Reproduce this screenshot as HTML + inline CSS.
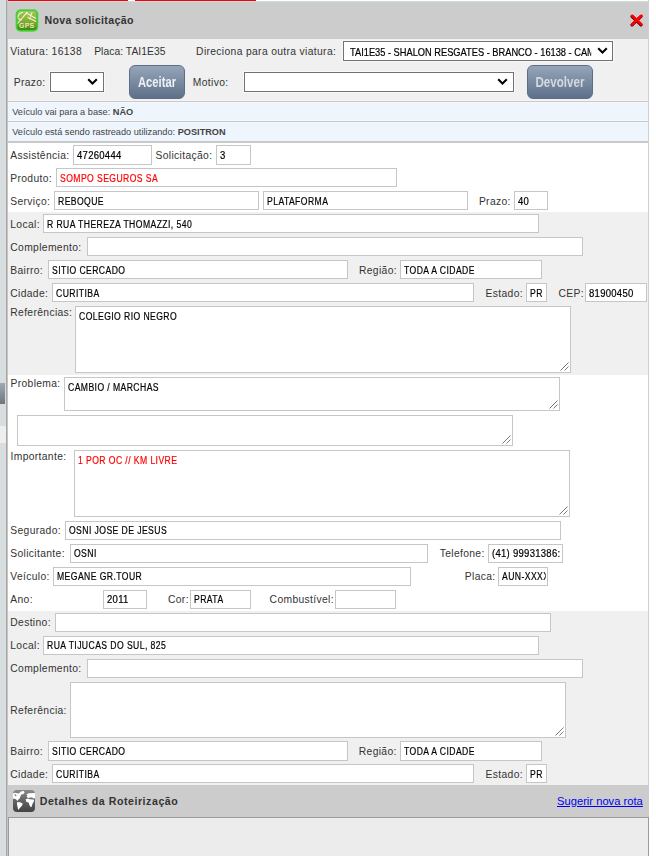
<!DOCTYPE html>
<html><head><meta charset="utf-8"><style>
*{margin:0;padding:0;box-sizing:content-box}
html,body{width:656px;height:856px;overflow:hidden;background:#fff}
body{position:relative;font-family:"Liberation Sans",sans-serif}
.t{position:absolute;white-space:nowrap}
.inp{position:absolute;background:#fff;border:1px solid #c6c6c6}
.sel{position:absolute;background:#fff;border:1px solid #727272;box-shadow:0 0 0 1px #f9f9f9}
.grip{position:absolute}
.bg{position:absolute}
.btn{position:absolute;border:1px solid #5d6f86;border-radius:6px;background:linear-gradient(#95a6b9,#5e7089);}
.btn span{position:absolute;left:0;right:0;text-align:center;font-weight:bold;color:#eef1f4;white-space:nowrap}
</style></head><body>
<div class="bg" style="left:0px;top:0px;width:6px;height:856px;background:#d8dde0;"></div>
<div class="bg" style="left:0px;top:383px;width:5px;height:21px;background:linear-gradient(#a0a8b0,#6e777f);"></div>
<div class="bg" style="left:0px;top:426px;width:6px;height:17px;background:#eeeeee;"></div>
<div class="bg" style="left:6px;top:0px;width:1px;height:856px;background:#a6a6a6;"></div>
<div class="bg" style="left:7px;top:0px;width:1px;height:856px;background:#c4c4c4;"></div>
<div class="bg" style="left:648px;top:0px;width:1px;height:856px;background:#cfcfcf;"></div>
<div class="bg" style="left:8px;top:0px;width:120px;height:1px;background:#f00;"></div>
<div class="bg" style="left:135px;top:0px;width:121px;height:1px;background:#f00;"></div>
<div class="bg" style="left:8px;top:1px;width:640px;height:1px;background:#cddcdc;"></div>
<div class="bg" style="left:8px;top:2px;width:640px;height:37px;background:#cccccc;"></div>
<div class="bg" style="left:8px;top:39px;width:640px;height:62px;background:#f0f0f0;"></div>
<div class="bg" style="left:8px;top:100px;width:640px;height:1px;background:#f5f5f5;"></div>
<div class="bg" style="left:8px;top:101px;width:640px;height:1px;background:#c8c8c8;"></div>
<div class="bg" style="left:8px;top:102px;width:640px;height:19px;background:#eef5fd;"></div>
<div class="bg" style="left:8px;top:102px;width:640px;height:1px;background:#f5f9fe;"></div>
<div class="bg" style="left:8px;top:120px;width:640px;height:1px;background:#f5f9fe;"></div>
<div class="bg" style="left:8px;top:121px;width:640px;height:1px;background:#c8c8c8;"></div>
<div class="bg" style="left:8px;top:122px;width:640px;height:19px;background:#eef5fd;"></div>
<div class="bg" style="left:8px;top:122px;width:640px;height:1px;background:#f5f9fe;"></div>
<div class="bg" style="left:8px;top:141px;width:640px;height:2px;background:#c8c8c8;"></div>
<div class="bg" style="left:8px;top:212px;width:640px;height:163px;background:#f0f0f0;"></div>
<div class="bg" style="left:8px;top:611px;width:640px;height:174px;background:#f0f0f0;"></div>
<div class="bg" style="left:8px;top:785px;width:641px;height:32px;background:#cccccc;"></div>
<div class="bg" style="left:8px;top:817px;width:641px;height:39px;background:#ececec;box-sizing:border-box;border:1px solid #9a9a9a;border-bottom:none"></div>
<svg style="position:absolute;left:15px;top:9px" width="24" height="24" viewBox="0 0 24 24">
<defs><linearGradient id="gg" x1="0" y1="0" x2="0" y2="1"><stop offset="0" stop-color="#a6c65a"/><stop offset="0.55" stop-color="#86ad30"/><stop offset="0.8" stop-color="#6f9a1c"/><stop offset="1" stop-color="#4a7a06"/></linearGradient>
<filter id="gl" x="-20%" y="-20%" width="140%" height="140%"><feGaussianBlur stdDeviation="0.7"/></filter></defs>
<rect x="0.6" y="0.2" width="22.8" height="22.6" rx="5" fill="#44dd44" filter="url(#gl)"/>
<rect x="1.6" y="1.4" width="20.8" height="20.2" rx="3.6" fill="#2fc42f"/>
<rect x="2.4" y="2.1" width="19.2" height="18.7" rx="3" fill="url(#gg)"/>
<g stroke="#f4fbe0" stroke-width="1.1" fill="none" opacity="0.95">
<path d="M2.5 14.5 L12.3 3.2"/>
<path d="M2.8 8.5 Q3.5 4 8 3.2"/>
<path d="M3 9.5 L6.5 11"/>
<path d="M10.8 3.8 L21 9.4"/>
<path d="M12.5 8.3 L21 12.6"/>
<path d="M17.2 3.2 L15.2 7.6"/>
<path d="M14 10 L16 8.6"/>
</g>
<text x="12" y="18.8" text-anchor="middle" font-family="Liberation Sans" font-size="6.4" fill="#f4fbe0" stroke="#f4fbe0" stroke-width="0.15" letter-spacing="0.6">GPS</text>
</svg>
<div class="t" style="left:44.5px;top:10.00px;font-size:10.6px;line-height:20px;color:#333;font-weight:bold;letter-spacing:0.35px;">Nova solicitação</div>
<svg style="position:absolute;left:629px;top:13px" width="16" height="15" viewBox="0 0 16 15">
<path d="M3.3 2.8 L12.3 11.3 M12.3 2.8 L3.3 11.3" stroke="#fff" stroke-width="3.2" stroke-linecap="round" transform="translate(0,-0.5)" opacity="0.6"/>
<path d="M3.3 2.8 L12.3 11.3 M12.3 2.8 L3.3 11.3" stroke="#300" stroke-width="3.2" stroke-linecap="round" transform="translate(-0.3,0.6)"/>
<path d="M3.3 2.8 L12.3 11.3 M12.3 2.8 L3.3 11.3" stroke="#f00" stroke-width="2.9" stroke-linecap="round"/>
</svg>
<div class="t" style="left:10.3px;top:41.50px;font-size:10.3px;line-height:20px;color:#333;letter-spacing:0.35px;">Viatura: 16138</div>
<div class="t" style="left:94.2px;top:41.50px;font-size:10.3px;line-height:20px;color:#333;letter-spacing:0.05px;">Placa: TAI1E35</div>
<div class="t" style="left:196.1px;top:41.50px;font-size:10.3px;line-height:20px;color:#333;letter-spacing:0.35px;">Direciona para outra viatura:</div>
<div class="sel" style="left:343px;top:41px;width:268px;height:18px"></div>
<div class="t" style="left:349.5px;top:42.50px;font-size:10.3px;line-height:20px;color:#000;transform:scaleX(0.9);transform-origin:0 0;letter-spacing:0.001px;width:268px;overflow:hidden;-webkit-text-stroke:0.2px #000;">TAI1E35 - SHALON RESGATES - BRANCO - 16138 - CAM</div>
<svg style="position:absolute;left:597px;top:47px" width="11" height="7" viewBox="0 0 11 7"><path d="M1.2 1.2 L5.5 5.5 L9.8 1.2" stroke="#000" stroke-width="2" fill="none"/></svg>
<div class="t" style="left:13.7px;top:72.50px;font-size:10.3px;line-height:20px;color:#333;letter-spacing:0.35px;">Prazo:</div>
<div class="sel" style="left:50px;top:72px;width:52px;height:18px"></div>
<svg style="position:absolute;left:87px;top:78px" width="11" height="7" viewBox="0 0 11 7"><path d="M1.2 1.2 L5.5 5.5 L9.8 1.2" stroke="#000" stroke-width="2" fill="none"/></svg>
<div class="btn" style="left:129px;top:65px;width:54px;height:32px"><span style="top:8px;font-size:14px;transform:scaleX(0.8)">Aceitar</span></div>
<div class="t" style="left:192.8px;top:72.50px;font-size:10.3px;line-height:20px;color:#333;letter-spacing:0.35px;">Motivo:</div>
<div class="sel" style="left:244px;top:72px;width:268px;height:18px"></div>
<svg style="position:absolute;left:497px;top:78px" width="11" height="7" viewBox="0 0 11 7"><path d="M1.2 1.2 L5.5 5.5 L9.8 1.2" stroke="#000" stroke-width="2" fill="none"/></svg>
<div class="btn" style="left:527px;top:65px;width:64px;height:32px"><span style="top:8px;font-size:14px;color:#d3d9e0;transform:scaleX(0.83)">Devolver</span></div>
<div class="t" style="left:12.2px;top:102.00px;font-size:9.2px;line-height:20px;color:#444;">Veículo vai para a base: <b>NÃO</b></div>
<div class="t" style="left:12.2px;top:122.00px;font-size:9.2px;line-height:20px;color:#444;">Veículo está sendo rastreado utilizando: <b>POSITRON</b></div>
<div class="t" style="left:10.3px;top:145.50px;font-size:10.3px;line-height:20px;color:#333;letter-spacing:0.35px;">Assistência:</div>
<div class="inp" style="left:73px;top:145px;width:77px;height:18px"></div>
<div class="t" style="left:76.5px;top:145.50px;font-size:10px;line-height:20px;color:#000;transform:scaleX(0.95);transform-origin:0 0;letter-spacing:0.3px;max-width:76.8px;overflow:hidden;-webkit-text-stroke:0.2px #000;">47260444</div>
<div class="t" style="left:155.5px;top:145.50px;font-size:10.3px;line-height:20px;color:#333;letter-spacing:0.35px;">Solicitação:</div>
<div class="inp" style="left:216px;top:145px;width:33px;height:18px"></div>
<div class="t" style="left:219.5px;top:145.50px;font-size:10px;line-height:20px;color:#000;transform:scaleX(0.95);transform-origin:0 0;letter-spacing:0.3px;max-width:30.5px;overflow:hidden;-webkit-text-stroke:0.2px #000;">3</div>
<div class="t" style="left:10.3px;top:168.50px;font-size:10.3px;line-height:20px;color:#333;letter-spacing:0.35px;">Produto:</div>
<div class="inp" style="left:56px;top:168px;width:339px;height:17px"></div>
<div class="t" style="left:59.5px;top:168.50px;font-size:10px;line-height:20px;color:#f00;transform:scaleX(0.86);transform-origin:0 0;letter-spacing:0.5px;max-width:389.5px;overflow:hidden;-webkit-text-stroke:0.2px #f00;">SOMPO SEGUROS SA</div>
<div class="t" style="left:10.3px;top:191.50px;font-size:10.3px;line-height:20px;color:#333;letter-spacing:0.35px;">Serviço:</div>
<div class="inp" style="left:54px;top:191px;width:203px;height:17px"></div>
<div class="t" style="left:57.5px;top:191.50px;font-size:10px;line-height:20px;color:#000;transform:scaleX(0.86);transform-origin:0 0;letter-spacing:0.5px;max-width:231.4px;overflow:hidden;-webkit-text-stroke:0.2px #000;">REBOQUE</div>
<div class="inp" style="left:263px;top:191px;width:203px;height:17px"></div>
<div class="t" style="left:266.5px;top:191.50px;font-size:10px;line-height:20px;color:#000;transform:scaleX(0.86);transform-origin:0 0;letter-spacing:0.5px;max-width:231.4px;overflow:hidden;-webkit-text-stroke:0.2px #000;">PLATAFORMA</div>
<div class="t" style="left:478.9px;top:191.50px;font-size:10.3px;line-height:20px;color:#333;letter-spacing:0.35px;">Prazo:</div>
<div class="inp" style="left:514px;top:191px;width:32px;height:17px"></div>
<div class="t" style="left:517.5px;top:191.50px;font-size:10px;line-height:20px;color:#000;transform:scaleX(0.95);transform-origin:0 0;letter-spacing:0.3px;max-width:29.5px;overflow:hidden;-webkit-text-stroke:0.2px #000;">40</div>
<div class="t" style="left:10.3px;top:214.50px;font-size:10.3px;line-height:20px;color:#333;letter-spacing:0.35px;">Local:</div>
<div class="inp" style="left:43px;top:214px;width:494px;height:17px"></div>
<div class="t" style="left:46.5px;top:214.50px;font-size:10px;line-height:20px;color:#000;transform:scaleX(0.86);transform-origin:0 0;letter-spacing:0.5px;max-width:569.8px;overflow:hidden;-webkit-text-stroke:0.2px #000;">R RUA THEREZA THOMAZZI, 540</div>
<div class="t" style="left:10.3px;top:237.50px;font-size:10.3px;line-height:20px;color:#333;letter-spacing:0.35px;">Complemento:</div>
<div class="inp" style="left:87px;top:237px;width:494px;height:17px"></div>
<div class="t" style="left:10.3px;top:260.50px;font-size:10.3px;line-height:20px;color:#333;letter-spacing:0.35px;">Bairro:</div>
<div class="inp" style="left:48px;top:260px;width:298px;height:17px"></div>
<div class="t" style="left:51.5px;top:260.50px;font-size:10px;line-height:20px;color:#000;transform:scaleX(0.86);transform-origin:0 0;letter-spacing:0.5px;max-width:341.9px;overflow:hidden;-webkit-text-stroke:0.2px #000;">SITIO CERCADO</div>
<div class="t" style="left:359px;top:260.50px;font-size:10.3px;line-height:20px;color:#333;letter-spacing:0.35px;">Região:</div>
<div class="inp" style="left:400px;top:260px;width:140px;height:17px"></div>
<div class="t" style="left:403.5px;top:260.50px;font-size:10px;line-height:20px;color:#000;transform:scaleX(0.86);transform-origin:0 0;letter-spacing:0.5px;max-width:158.1px;overflow:hidden;-webkit-text-stroke:0.2px #000;">TODA A CIDADE</div>
<div class="t" style="left:10.3px;top:283.50px;font-size:10.3px;line-height:20px;color:#333;letter-spacing:0.35px;">Cidade:</div>
<div class="inp" style="left:52px;top:283px;width:420px;height:17px"></div>
<div class="t" style="left:55.5px;top:283.50px;font-size:10px;line-height:20px;color:#000;transform:scaleX(0.86);transform-origin:0 0;letter-spacing:0.5px;max-width:483.7px;overflow:hidden;-webkit-text-stroke:0.2px #000;">CURITIBA</div>
<div class="t" style="left:485.6px;top:283.50px;font-size:10.3px;line-height:20px;color:#333;letter-spacing:0.35px;">Estado:</div>
<div class="inp" style="left:526px;top:283px;width:19px;height:17px"></div>
<div class="t" style="left:529.5px;top:283.50px;font-size:10px;line-height:20px;color:#000;transform:scaleX(0.86);transform-origin:0 0;letter-spacing:0.5px;max-width:17.4px;overflow:hidden;-webkit-text-stroke:0.2px #000;">PR</div>
<div class="t" style="left:558.5px;top:283.50px;font-size:10.3px;line-height:20px;color:#333;letter-spacing:0.35px;">CEP:</div>
<div class="inp" style="left:585px;top:283px;width:60px;height:17px"></div>
<div class="t" style="left:588.5px;top:283.50px;font-size:10px;line-height:20px;color:#000;transform:scaleX(0.95);transform-origin:0 0;letter-spacing:0.3px;max-width:58.9px;overflow:hidden;-webkit-text-stroke:0.2px #000;">81900450</div>
<div class="t" style="left:10.3px;top:302.50px;font-size:10.3px;line-height:20px;color:#333;letter-spacing:0.35px;">Referências:</div>
<div class="inp" style="left:75px;top:306px;width:494px;height:65px"></div>
<svg class="grip" style="left:559px;top:361px" width="10" height="10" viewBox="0 0 10 10"><path d="M1.5 9.5 L9.5 1.5 M5.5 9.5 L9.5 5.5" stroke="#6a6a6a" stroke-width="0.9" fill="none"/></svg>
<div class="t" style="left:79px;top:306.50px;font-size:10px;line-height:20px;color:#000;transform:scaleX(0.86);transform-origin:0 0;letter-spacing:0.5px;-webkit-text-stroke:0.2px #000;">COLEGIO RIO NEGRO</div>
<div class="t" style="left:10.5px;top:373.50px;font-size:10.3px;line-height:20px;color:#333;letter-spacing:0.35px;">Problema:</div>
<div class="inp" style="left:64px;top:377px;width:494px;height:32px"></div>
<svg class="grip" style="left:548px;top:399px" width="10" height="10" viewBox="0 0 10 10"><path d="M1.5 9.5 L9.5 1.5 M5.5 9.5 L9.5 5.5" stroke="#6a6a6a" stroke-width="0.9" fill="none"/></svg>
<div class="t" style="left:68px;top:377.50px;font-size:10px;line-height:20px;color:#000;transform:scaleX(0.86);transform-origin:0 0;letter-spacing:0.5px;-webkit-text-stroke:0.2px #000;">CAMBIO / MARCHAS</div>
<div class="inp" style="left:17px;top:415px;width:494px;height:29px"></div>
<svg class="grip" style="left:501px;top:434px" width="10" height="10" viewBox="0 0 10 10"><path d="M1.5 9.5 L9.5 1.5 M5.5 9.5 L9.5 5.5" stroke="#6a6a6a" stroke-width="0.9" fill="none"/></svg>
<div class="t" style="left:10.5px;top:446.50px;font-size:10.3px;line-height:20px;color:#333;letter-spacing:0.35px;">Importante:</div>
<div class="inp" style="left:74px;top:450px;width:494px;height:65px"></div>
<svg class="grip" style="left:558px;top:505px" width="10" height="10" viewBox="0 0 10 10"><path d="M1.5 9.5 L9.5 1.5 M5.5 9.5 L9.5 5.5" stroke="#6a6a6a" stroke-width="0.9" fill="none"/></svg>
<div class="t" style="left:78px;top:450.50px;font-size:10px;line-height:20px;color:#f00;transform:scaleX(0.86);transform-origin:0 0;letter-spacing:0.5px;-webkit-text-stroke:0.2px #f00;">1 POR OC // KM LIVRE</div>
<div class="t" style="left:10.3px;top:520.50px;font-size:10.3px;line-height:20px;color:#333;letter-spacing:0.35px;">Segurado:</div>
<div class="inp" style="left:65px;top:521px;width:494px;height:17px"></div>
<div class="t" style="left:68.5px;top:520.50px;font-size:10px;line-height:20px;color:#000;transform:scaleX(0.86);transform-origin:0 0;letter-spacing:0.5px;max-width:569.8px;overflow:hidden;-webkit-text-stroke:0.2px #000;">OSNI JOSE DE JESUS</div>
<div class="t" style="left:10.3px;top:543.50px;font-size:10.3px;line-height:20px;color:#333;letter-spacing:0.35px;">Solicitante:</div>
<div class="inp" style="left:70px;top:544px;width:356px;height:17px"></div>
<div class="t" style="left:73.5px;top:543.50px;font-size:10px;line-height:20px;color:#000;transform:scaleX(0.86);transform-origin:0 0;letter-spacing:0.5px;max-width:409.3px;overflow:hidden;-webkit-text-stroke:0.2px #000;">OSNI</div>
<div class="t" style="left:439.7px;top:543.50px;font-size:10.3px;line-height:20px;color:#333;letter-spacing:0.35px;">Telefone:</div>
<div class="inp" style="left:488px;top:544px;width:73px;height:17px"></div>
<div class="t" style="left:491.5px;top:543.50px;font-size:10px;line-height:20px;color:#000;transform:scaleX(0.95);transform-origin:0 0;letter-spacing:0.3px;max-width:72.6px;overflow:hidden;-webkit-text-stroke:0.2px #000;">(41) 99931386:</div>
<div class="t" style="left:10.3px;top:566.50px;font-size:10.3px;line-height:20px;color:#333;letter-spacing:0.35px;">Veículo:</div>
<div class="inp" style="left:53px;top:567px;width:356px;height:17px"></div>
<div class="t" style="left:56.5px;top:566.50px;font-size:10px;line-height:20px;color:#000;transform:scaleX(0.86);transform-origin:0 0;letter-spacing:0.5px;max-width:409.3px;overflow:hidden;-webkit-text-stroke:0.2px #000;">MEGANE GR.TOUR</div>
<div class="t" style="left:464.8px;top:566.50px;font-size:10.3px;line-height:20px;color:#333;letter-spacing:0.35px;">Placa:</div>
<div class="inp" style="left:498px;top:567px;width:48px;height:17px"></div>
<div class="t" style="left:501.5px;top:566.50px;font-size:10px;line-height:20px;color:#000;transform:scaleX(0.86);transform-origin:0 0;letter-spacing:0.5px;max-width:51.2px;overflow:hidden;-webkit-text-stroke:0.2px #000;">AUN-XXXX</div>
<div class="t" style="left:10.3px;top:589.50px;font-size:10.3px;line-height:20px;color:#333;letter-spacing:0.35px;">Ano:</div>
<div class="inp" style="left:103px;top:590px;width:42px;height:17px"></div>
<div class="t" style="left:106.5px;top:589.50px;font-size:10px;line-height:20px;color:#000;transform:scaleX(0.95);transform-origin:0 0;letter-spacing:0.3px;max-width:40.0px;overflow:hidden;-webkit-text-stroke:0.2px #000;">2011</div>
<div class="t" style="left:168px;top:589.50px;font-size:10.3px;line-height:20px;color:#333;letter-spacing:0.35px;">Cor:</div>
<div class="inp" style="left:190px;top:590px;width:59px;height:17px"></div>
<div class="t" style="left:193.5px;top:589.50px;font-size:10px;line-height:20px;color:#000;transform:scaleX(0.86);transform-origin:0 0;letter-spacing:0.5px;max-width:64.0px;overflow:hidden;-webkit-text-stroke:0.2px #000;">PRATA</div>
<div class="t" style="left:269.6px;top:589.50px;font-size:10.3px;line-height:20px;color:#333;letter-spacing:0.35px;">Combustível:</div>
<div class="inp" style="left:335px;top:590px;width:59px;height:17px"></div>
<div class="t" style="left:10.3px;top:612.50px;font-size:10.3px;line-height:20px;color:#333;letter-spacing:0.35px;">Destino:</div>
<div class="inp" style="left:55px;top:613px;width:494px;height:17px"></div>
<div class="t" style="left:10.3px;top:635.50px;font-size:10.3px;line-height:20px;color:#333;letter-spacing:0.35px;">Local:</div>
<div class="inp" style="left:43px;top:636px;width:494px;height:17px"></div>
<div class="t" style="left:46.5px;top:635.50px;font-size:10px;line-height:20px;color:#000;transform:scaleX(0.86);transform-origin:0 0;letter-spacing:0.5px;max-width:569.8px;overflow:hidden;-webkit-text-stroke:0.2px #000;">RUA TIJUCAS DO SUL, 825</div>
<div class="t" style="left:10.3px;top:658.50px;font-size:10.3px;line-height:20px;color:#333;letter-spacing:0.35px;">Complemento:</div>
<div class="inp" style="left:87px;top:659px;width:494px;height:17px"></div>
<div class="t" style="left:10.3px;top:700.50px;font-size:10.3px;line-height:20px;color:#333;letter-spacing:0.35px;">Referência:</div>
<div class="inp" style="left:70px;top:682px;width:494px;height:54px"></div>
<svg class="grip" style="left:554px;top:726px" width="10" height="10" viewBox="0 0 10 10"><path d="M1.5 9.5 L9.5 1.5 M5.5 9.5 L9.5 5.5" stroke="#6a6a6a" stroke-width="0.9" fill="none"/></svg>
<div class="t" style="left:10.3px;top:741.50px;font-size:10.3px;line-height:20px;color:#333;letter-spacing:0.35px;">Bairro:</div>
<div class="inp" style="left:48px;top:741px;width:298px;height:18px"></div>
<div class="t" style="left:51.5px;top:741.50px;font-size:10px;line-height:20px;color:#000;transform:scaleX(0.86);transform-origin:0 0;letter-spacing:0.5px;max-width:341.9px;overflow:hidden;-webkit-text-stroke:0.2px #000;">SITIO CERCADO</div>
<div class="t" style="left:358.8px;top:741.50px;font-size:10.3px;line-height:20px;color:#333;letter-spacing:0.35px;">Região:</div>
<div class="inp" style="left:400px;top:741px;width:140px;height:18px"></div>
<div class="t" style="left:403.5px;top:741.50px;font-size:10px;line-height:20px;color:#000;transform:scaleX(0.86);transform-origin:0 0;letter-spacing:0.5px;max-width:158.1px;overflow:hidden;-webkit-text-stroke:0.2px #000;">TODA A CIDADE</div>
<div class="t" style="left:10.3px;top:764.50px;font-size:10.3px;line-height:20px;color:#333;letter-spacing:0.35px;">Cidade:</div>
<div class="inp" style="left:52px;top:764px;width:420px;height:17px"></div>
<div class="t" style="left:55.5px;top:764.50px;font-size:10px;line-height:20px;color:#000;transform:scaleX(0.86);transform-origin:0 0;letter-spacing:0.5px;max-width:483.7px;overflow:hidden;-webkit-text-stroke:0.2px #000;">CURITIBA</div>
<div class="t" style="left:485.6px;top:764.50px;font-size:10.3px;line-height:20px;color:#333;letter-spacing:0.35px;">Estado:</div>
<div class="inp" style="left:526px;top:764px;width:19px;height:17px"></div>
<div class="t" style="left:529.5px;top:764.50px;font-size:10px;line-height:20px;color:#000;transform:scaleX(0.86);transform-origin:0 0;letter-spacing:0.5px;max-width:17.4px;overflow:hidden;-webkit-text-stroke:0.2px #000;">PR</div>
<svg style="position:absolute;left:13px;top:790px" width="22" height="22" viewBox="0 0 22 22">
<defs><linearGradient id="wg" x1="0" y1="0" x2="0" y2="1"><stop offset="0" stop-color="#8a8a8a"/><stop offset="0.45" stop-color="#666"/><stop offset="1" stop-color="#444"/></linearGradient>
<clipPath id="wc"><rect x="0" y="0" width="22" height="22" rx="4"/></clipPath></defs>
<rect x="0" y="0" width="22" height="22" rx="4" fill="url(#wg)"/>
<g clip-path="url(#wc)" fill="#fff">
<path d="M0 3.2 L2.5 2.8 L5 3.4 L7 3.1 L8.2 4.6 L7.4 6.6 L6.6 8.4 L5.2 9.8 L4.3 11 L3.7 10.1 L2.4 9.1 L1 8.6 L0 9 Z"/>
<path d="M1.2 4.5 L3 4.4 L3.5 6 L2.4 6.3 Z" fill="#777"/>
<path d="M6.6 2.4 Q8 0.7 10.5 0.9 Q12.2 1.8 11.1 3.4 Q9.2 4.8 7.6 4.3 Z"/>
<path d="M4.2 11.9 L7 12.2 L9.8 13.6 L9.1 15.5 L7.1 17.8 L5.1 20 L4.6 17.2 L4 14.6 Z"/>
<path d="M13.4 4.2 L16 3.3 L22 3 L22 8.2 L20.6 8.6 L19 7.6 L17 7.4 L15.2 8 L13.7 7.1 L14.4 5.6 Z"/>
<path d="M12.6 9.2 L15 8.6 L17 9.2 L20.6 9.4 L21.2 11 L19.6 13.6 L18.6 16.8 L17.9 17.3 L16.6 15.6 L15.6 12.6 L13.4 12.1 Z"/>
</g></svg>
<div class="t" style="left:39.7px;top:791.00px;font-size:10.6px;line-height:20px;color:#333;font-weight:bold;letter-spacing:0.55px;">Detalhes da Roteirização</div>
<div class="t" style="left:557px;top:791.00px;font-size:11.2px;line-height:20px;color:#0000ee;text-decoration:underline;">Sugerir nova rota</div>
</body></html>
